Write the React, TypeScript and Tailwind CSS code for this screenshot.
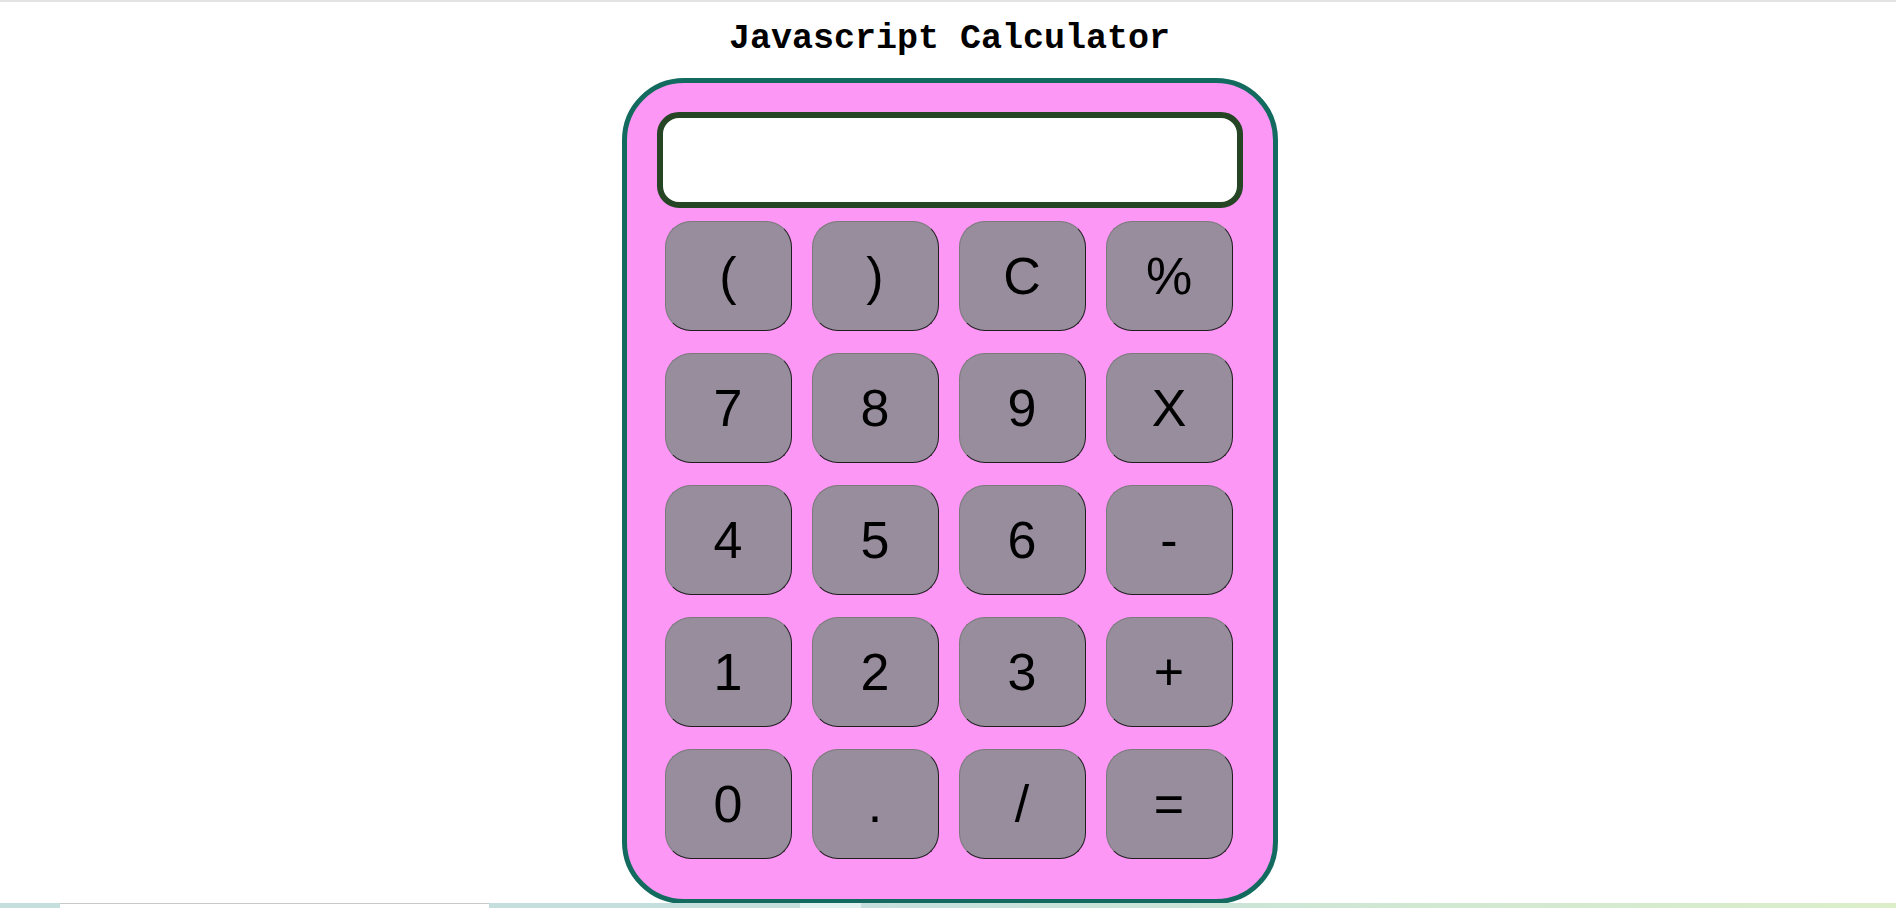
import React from 'react'

const KEYS = ['(', ')', 'C', '%', '7', '8', '9', 'X', '4', '5', '6', '-', '1', '2', '3', '+', '0', '.', '/', '=']

function Key({ label }: { label: string }) {
  return (
    <button
      type="button"
      className="flex h-[110px] items-center justify-center rounded-[26px] border-[1.5px] border-t-[#7a7a7a] border-l-[#7a7a7a] border-b-[#1e1e1e] border-r-[#1e1e1e] bg-[#978d9d] font-['Liberation_Sans',Arial,sans-serif] text-[52px] leading-none text-black"
    >
      {label}
    </button>
  )
}

export default function App() {
  return (
    <div className="relative min-h-[908px] w-full border-t-2 border-[#e3e3e3] bg-white pl-[3px]">
      <h1 className="mt-[17px] text-center font-['Courier_New','Liberation_Mono',monospace] text-[35px] font-bold leading-[40px] text-black">
        Javascript Calculator
      </h1>
      <div className="mx-auto mt-[19px] w-[656px] rounded-[62px] border-[5px] border-[#136b5f] bg-[#fc97f5] px-[30px] pt-[29px] pb-[40px]">
        <div className="h-[96px] w-full rounded-[22px] border-[6px] border-[#254525] bg-white" />
        <div className="mt-[13px] grid grid-cols-4 gap-x-[20px] gap-y-[22px] pl-[8px] pr-[10px]">
          {KEYS.map((k) => (
            <Key key={k} label={k} />
          ))}
        </div>
      </div>
      <div className="fixed bottom-0 left-0 right-0 flex h-[5px]">
        <div className="w-[60px] bg-[#c4dfdd]" />
        <div className="w-[429px] border-t border-[#c8c8c8] bg-white" />
        <div className="w-[311px] bg-[#c4dfdd]" />
        <div className="w-[61px] bg-[#e2f0ef]" />
        <div className="flex-1 bg-gradient-to-r from-[#c4dfdd] to-[#dcefc9]" />
      </div>
    </div>
  )
}
